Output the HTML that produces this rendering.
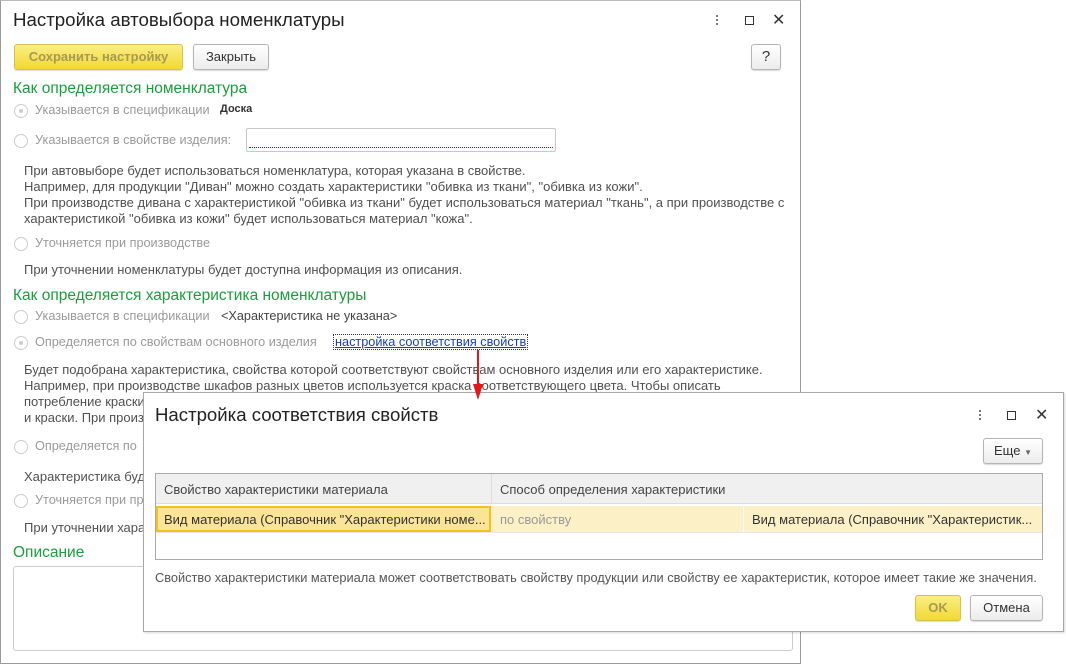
<!DOCTYPE html>
<html><head><meta charset="utf-8">
<style>
*{margin:0;padding:0;box-sizing:border-box}
body{width:1066px;height:672px;background:#fff;position:relative;overflow:hidden;font-family:"Liberation Sans",Arial,sans-serif;font-size:13px;color:#505050}
.a{position:absolute;white-space:nowrap}
.g{color:#1b9d3c;font-size:15.5px}
.gr{color:#9a9a9a;font-size:12.7px}
.rad{position:absolute;width:14px;height:14px;border:1px solid #ccc;border-radius:50%;background:#fff}
.rad.on:after{content:"";position:absolute;left:4px;top:4px;width:4px;height:4px;border-radius:50%;background:#ccc}
.btn{position:absolute;border:1px solid #b5b5b5;border-radius:3px;background:linear-gradient(#fff,#ececec);text-align:center;font-size:13px;color:#333;box-shadow:0 1px 1px rgba(0,0,0,.15)}
.ybtn{background:linear-gradient(#fbee84,#f1d933);border-color:#d8c04a;color:#a69a55;font-weight:bold}
</style></head><body>
<div class="a" style="left:0;top:0;width:801px;height:664px;border:1px solid #9a9a9a;border-top-color:#bbb"></div>
<div class="a" style="left:13px;top:9px;font-size:18.7px;color:#222">Настройка автовыбора номенклатуры</div>
<div class="a" style="left:716px;top:15px;width:2px;height:10px;border-left:2px dotted #777"></div>
<div class="a" style="left:745px;top:16px;width:9px;height:9px;border:1px solid #333"></div>
<div class="a" style="left:772px;top:10px;font-size:16px;color:#333">✕</div>
<div class="btn ybtn" style="left:14px;top:44px;width:169px;height:26px;line-height:24px">Сохранить настройку</div>
<div class="btn" style="left:193px;top:44px;width:76px;height:26px;line-height:24px">Закрыть</div>
<div class="btn" style="left:751px;top:44px;width:30px;height:26px;line-height:24px;font-size:15px">?</div>
<div class="a g" style="left:13px;top:80px">Как определяется номенклатура</div>
<div class="rad on" style="left:14px;top:104px"></div>
<div class="a gr" style="left:35px;top:103px">Указывается в спецификации</div>
<div class="a" style="left:220px;top:103px;font-weight:bold;color:#333;font-size:11px">Доска</div>
<div class="rad" style="left:14px;top:134px"></div>
<div class="a gr" style="left:35px;top:133px">Указывается в свойстве изделия:</div>
<div class="a" style="left:246px;top:128px;width:310px;height:24px;border:1px solid #c8c8c8;border-radius:2px"><div style="position:absolute;left:2px;right:2px;bottom:3px;border-bottom:1px dotted #c00"></div></div>
<div class="a" style="left:24px;top:163px;line-height:16px">При автовыборе будет использоваться номенклатура, которая указана в свойстве.<br>Например, для продукции "Диван" можно создать характеристики "обивка из ткани", "обивка из кожи".<br>При производстве дивана с характеристикой "обивка из ткани" будет использоваться материал "ткань", а при производстве с<br>характеристикой "обивка из кожи" будет использоваться материал "кожа".</div>
<div class="rad" style="left:14px;top:237px"></div>
<div class="a gr" style="left:35px;top:236px">Уточняется при производстве</div>
<div class="a" style="left:24px;top:262px">При уточнении номенклатуры будет доступна информация из описания.</div>
<div class="a g" style="left:13px;top:287px">Как определяется характеристика номенклатуры</div>
<div class="rad" style="left:14px;top:310px"></div>
<div class="a gr" style="left:35px;top:309px">Указывается в спецификации</div>
<div class="a" style="left:221px;top:309px;color:#444;font-size:12.7px">&lt;Характеристика не указана&gt;</div>
<div class="rad on" style="left:14px;top:336px"></div>
<div class="a gr" style="left:35px;top:335px">Определяется по свойствам основного изделия</div>
<div class="a" style="left:333px;top:334px;border:1px dotted #333;padding:0 1px;color:#1a3fb0;text-decoration:underline;font-size:12.7px">настройка соответствия свойств</div>
<div class="a" style="left:24px;top:362px;line-height:16px">Будет подобрана характеристика, свойства которой соответствуют свойствам основного изделия или его характеристике.<br>Например, при производстве шкафов разных цветов используется краска соответствующего цвета. Чтобы описать<br>потребление краски<br>и краски. При произ</div>
<div class="rad" style="left:14px;top:440px"></div>
<div class="a gr" style="left:35px;top:439px">Определяется по</div>
<div class="a" style="left:24px;top:469px">Характеристика буд</div>
<div class="rad" style="left:14px;top:494px"></div>
<div class="a gr" style="left:35px;top:493px">Уточняется при пр</div>
<div class="a" style="left:24px;top:520px">При уточнении хара</div>
<div class="a g" style="left:13px;top:544px">Описание</div>
<div class="a" style="left:13px;top:566px;width:780px;height:85px;border:1px solid #ccc;border-radius:3px"></div>
<div class="a" style="left:143px;top:392px;width:921px;height:240px;background:#fff;border:1px solid #a8a8a8;box-shadow:1px 1px 2px rgba(0,0,0,.15)"></div>
<div class="a" style="left:155px;top:404px;font-size:18.6px;color:#222">Настройка соответствия свойств</div>
<div class="a" style="left:979px;top:410px;width:2px;height:10px;border-left:2px dotted #777"></div>
<div class="a" style="left:1007px;top:411px;width:9px;height:9px;border:1px solid #333"></div>
<div class="a" style="left:1035px;top:405px;font-size:16px;color:#333">✕</div>
<div class="btn" style="left:983px;top:438px;width:60px;height:26px;line-height:24px">Еще <span style="font-size:8px;color:#666">▼</span></div>
<div class="a" style="left:155px;top:473px;width:888px;height:87px;border:1px solid #aaa"></div>
<div class="a" style="left:156px;top:474px;width:886px;height:30px;background:#f0f0f0;border-bottom:1px solid #ddd"></div>
<div class="a" style="left:491px;top:474px;width:1px;height:30px;background:#ddd"></div>
<div class="a" style="left:164px;top:482px;color:#444">Свойство характеристики материала</div>
<div class="a" style="left:500px;top:482px;color:#444">Способ определения характеристики</div>
<div class="a" style="left:156px;top:506px;width:886px;height:27px;background:#fcf1c6;border-bottom:1px solid #e6e6e6"></div>
<div class="a" style="left:156px;top:506px;width:335px;height:26px;background:#fbe495;border:2px solid #f0c21c"></div>
<div class="a" style="left:743px;top:506px;width:1px;height:26px;background:#fff"></div>
<div class="a" style="left:164px;top:512px;color:#333">Вид материала (Справочник "Характеристики номе...</div>
<div class="a" style="left:500px;top:512px;color:#999">по свойству</div>
<div class="a" style="left:752px;top:512px;color:#333">Вид материала (Справочник "Характеристик...</div>
<div class="a" style="left:155px;top:570px;color:#555;font-size:12.8px">Свойство характеристики материала может соответствовать свойству продукции или свойству ее характеристик, которое имеет такие же значения.</div>
<div class="btn ybtn" style="left:915px;top:595px;width:46px;height:26px;line-height:24px">OK</div>
<div class="btn" style="left:970px;top:595px;width:73px;height:26px;line-height:24px">Отмена</div>
<svg class="a" style="left:470px;top:350px" width="16" height="52"><line x1="8" y1="0" x2="8" y2="36" stroke="#e8161c" stroke-width="2"/><path d="M3 34 L8 50 L13 34 Z" fill="#e8161c"/></svg>
</body></html>
